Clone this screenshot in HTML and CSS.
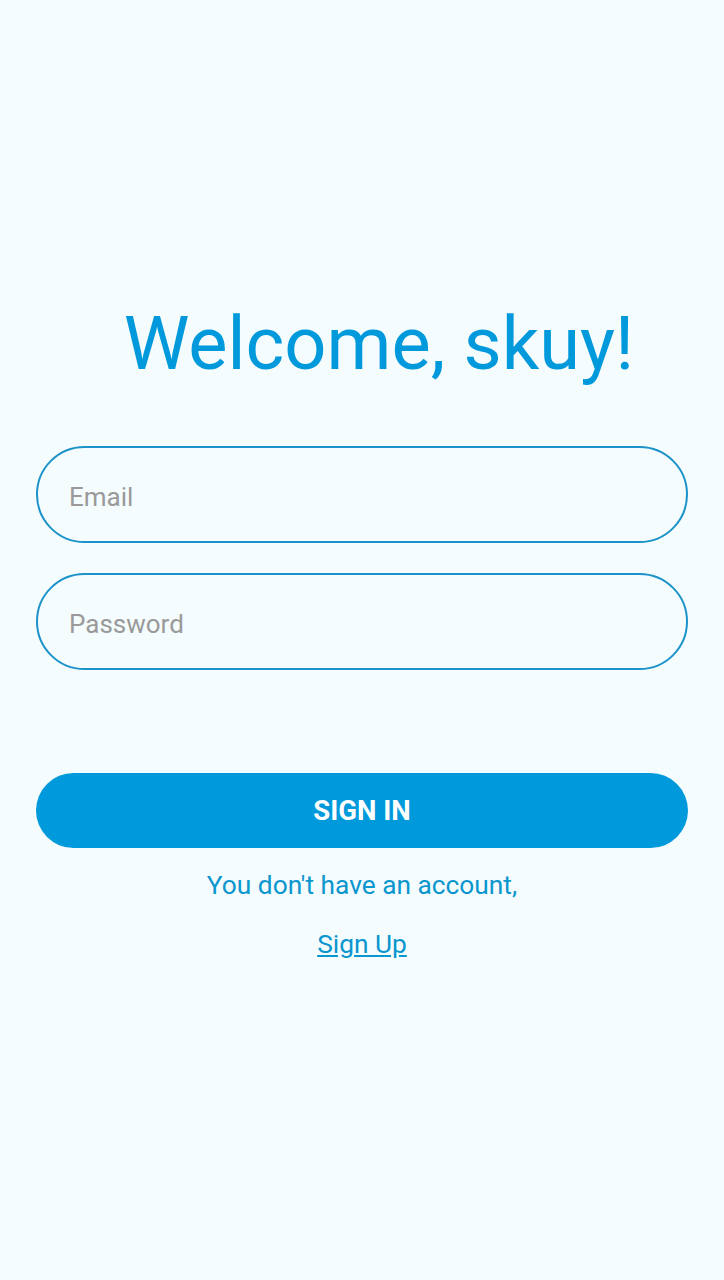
FILE: index.html
```html
<!DOCTYPE html>
<html>
<head>
<meta charset="utf-8">
<link rel="stylesheet" href="styles.css">
</head>
<body>
<main class="screen">
  <h1 class="title">Welcome, skuy!</h1>
  <form class="form">
    <input class="field" type="email" placeholder="Email">
    <input class="field" type="password" placeholder="Password">
    <button class="btn" type="button">SIGN IN</button>
  </form>
  <p class="hint">You don't have an account,</p>
  <a class="link" href="#">Sign Up</a>
</main>
</body>
</html>
```

FILE: styles.css
```css
html, body {
  margin: 0;
  padding: 0;
  background: #f4fcfe;
}
body {
  font-family: Roboto, "Noto Sans", sans-serif;
}
.screen {
  height: 1280px;
  box-sizing: border-box;
  padding: 0 36px;
  display: flex;
  flex-direction: column;
  align-items: stretch;
}
.title {
  margin: 296px 0 0 0;
  padding-left: 34px;
  text-align: center;
  font-weight: 400;
  font-size: 74px;
  line-height: 96px;
  color: #0099db;
}
.form {
  display: flex;
  flex-direction: column;
  margin-top: 54px;
}
.field {
  height: 97px;
  box-sizing: border-box;
  border: 2px solid #1b93c9;
  border-radius: 49px;
  background: transparent;
  padding: 4px 31px 0;
  font-family: Roboto, sans-serif;
  font-size: 26px;
  color: #333;
  outline: none;
}
.field + .field {
  margin-top: 30px;
}
.field::placeholder {
  color: #9a9a9a;
}
.btn {
  margin-top: 103px;
  height: 75px;
  border: none;
  border-radius: 38px;
  background: #0099db;
  color: #fff;
  font-family: Roboto, sans-serif;
  font-weight: 700;
  font-size: 27.5px;
  letter-spacing: 0;
}
.hint {
  margin: 21px 0 0 0;
  text-align: center;
  font-size: 26.3px;
  line-height: 32px;
  color: #0a96cf;
}
.link {
  align-self: center;
  margin-top: 27px;
  font-size: 26.3px;
  line-height: 32px;
  color: #0a96cf;
  text-decoration: underline;
}
```
